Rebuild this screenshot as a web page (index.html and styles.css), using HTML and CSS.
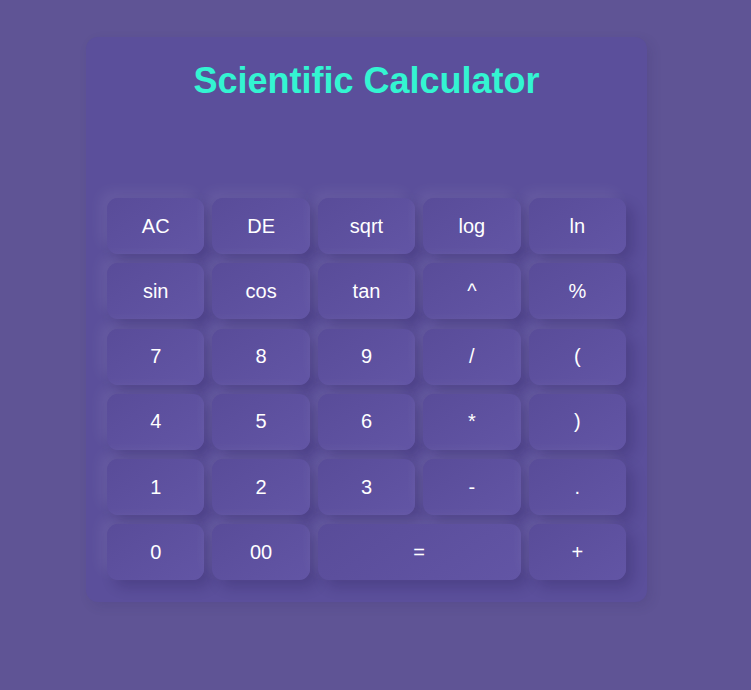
FILE: index.html
```html
<!DOCTYPE html>
<html lang="en">
<head>
<meta charset="utf-8">
<title>Scientific Calculator</title>
<link rel="stylesheet" href="styles.css">
</head>
<body>
<div class="page">
  <div class="calculator">
    <h1 class="title">Scientific Calculator</h1>
    <div class="display"></div>
    <div class="keys">
      <button class="key">AC</button>
      <button class="key">DE</button>
      <button class="key">sqrt</button>
      <button class="key">log</button>
      <button class="key">ln</button>
      <button class="key">sin</button>
      <button class="key">cos</button>
      <button class="key">tan</button>
      <button class="key">^</button>
      <button class="key">%</button>
      <button class="key">7</button>
      <button class="key">8</button>
      <button class="key">9</button>
      <button class="key">/</button>
      <button class="key">(</button>
      <button class="key">4</button>
      <button class="key">5</button>
      <button class="key">6</button>
      <button class="key">*</button>
      <button class="key">)</button>
      <button class="key">1</button>
      <button class="key">2</button>
      <button class="key">3</button>
      <button class="key">-</button>
      <button class="key">.</button>
      <button class="key">0</button>
      <button class="key">00</button>
      <button class="key key-wide">=</button>
      <button class="key">+</button>
    </div>
  </div>
</div>
</body>
</html>
```
FILE: styles.css
```css
html, body {
  margin: 0;
  padding: 0;
  background: #5f5495;
  font-family: "Liberation Sans", Arial, sans-serif;
}

.page {
  padding: 37px 0 0 86px;
  height: 690px;
  box-sizing: border-box;
}

.calculator {
  width: 561px;
  box-sizing: border-box;
  padding: 21px 21px 22px;
  background: #5b4f9b;
  border-radius: 12px;
  box-shadow: 4px 4px 12px rgba(40, 30, 80, 0.12);
  display: flex;
  flex-direction: column;
}

.title {
  margin: 2px 0 0;
  font-size: 36px;
  line-height: 42px;
  font-weight: bold;
  text-align: center;
  color: #33f5d2;
}

.display {
  height: 96px;
}

.keys {
  display: grid;
  grid-template-columns: repeat(5, 1fr);
  grid-auto-rows: 56px;
  column-gap: 8px;
  row-gap: 9.25px;
}

.key {
  border: none;
  border-radius: 11px;
  background: linear-gradient(145deg, #594c99, #6255a5);
  box-shadow: -7px -7px 14px rgba(255, 255, 255, 0.07), 7px 7px 14px rgba(20, 10, 60, 0.2);
  color: #ffffff;
  font-family: "Liberation Sans", Arial, sans-serif;
  font-size: 20px;
  padding: 0;
}

.key-wide {
  grid-column: span 2;
}
```
